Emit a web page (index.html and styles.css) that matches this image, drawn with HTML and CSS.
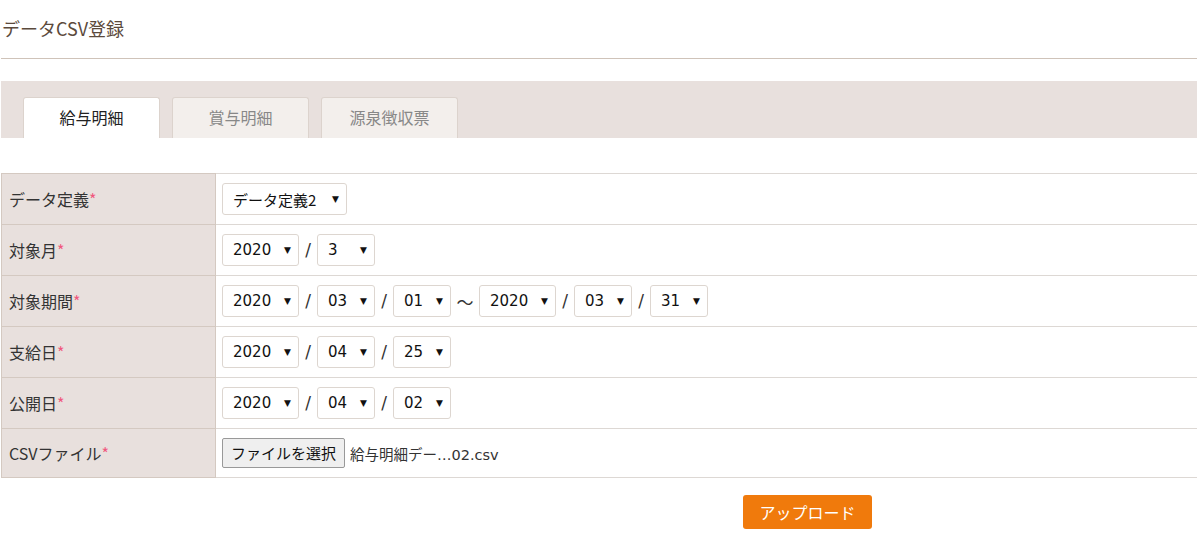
FILE: index.html
```html
<!DOCTYPE html>
<html lang="ja">
<head>
    <meta charset="UTF-8">
    <title>データCSV登録</title>
    <link rel="stylesheet" href="styles.css">
</head>
<body>
    <h1 class="page-title">データCSV登録</h1>

    <div class="tabs">
        <a class="tab active">給与明細</a>
        <a class="tab">賞与明細</a>
        <a class="tab">源泉徴収票</a>
    </div>

    <form class="csv-form">
        <table class="form-table">
            <tr>
                <th>データ定義<span class="req">*</span></th>
                <td>
                    <div class="fields">
                        <span class="sel w-def"><select><option>データ定義2</option></select></span>
                    </div>
                </td>
            </tr>
            <tr>
                <th>対象月<span class="req">*</span></th>
                <td>
                    <div class="fields">
                        <span class="sel w-year"><select><option>2020</option></select></span>
                        <span class="sep">/</span>
                        <span class="sel w-md"><select><option>3</option></select></span>
                    </div>
                </td>
            </tr>
            <tr>
                <th>対象期間<span class="req">*</span></th>
                <td>
                    <div class="fields">
                        <span class="sel w-year"><select><option>2020</option></select></span>
                        <span class="sep">/</span>
                        <span class="sel w-md"><select><option>03</option></select></span>
                        <span class="sep">/</span>
                        <span class="sel w-md"><select><option>01</option></select></span>
                        <span class="tilde">～</span>
                        <span class="sel w-year"><select><option>2020</option></select></span>
                        <span class="sep">/</span>
                        <span class="sel w-md"><select><option>03</option></select></span>
                        <span class="sep">/</span>
                        <span class="sel w-md"><select><option>31</option></select></span>
                    </div>
                </td>
            </tr>
            <tr>
                <th>支給日<span class="req">*</span></th>
                <td>
                    <div class="fields">
                        <span class="sel w-year"><select><option>2020</option></select></span>
                        <span class="sep">/</span>
                        <span class="sel w-md"><select><option>04</option></select></span>
                        <span class="sep">/</span>
                        <span class="sel w-md"><select><option>25</option></select></span>
                    </div>
                </td>
            </tr>
            <tr>
                <th>公開日<span class="req">*</span></th>
                <td>
                    <div class="fields">
                        <span class="sel w-year"><select><option>2020</option></select></span>
                        <span class="sep">/</span>
                        <span class="sel w-md"><select><option>04</option></select></span>
                        <span class="sep">/</span>
                        <span class="sel w-md"><select><option>02</option></select></span>
                    </div>
                </td>
            </tr>
            <tr class="last">
                <th>CSVファイル<span class="req">*</span></th>
                <td>
                    <div class="fields">
                        <span class="file-btn">ファイルを選択</span>
                        <span class="file-name">給与明細デー…02.csv</span>
                    </div>
                </td>
            </tr>
        </table>

        <div class="actions">
            <button type="submit" class="btn-upload">アップロード</button>
        </div>
    </form>
</body>
</html>
```

FILE: styles.css
```css
body {
    margin: 0;
    padding: 0 0 0 1px;
    font-family: "DejaVu Sans", "Noto Sans CJK JP", sans-serif;
    color: #333;
    background-color: #fff;
}

.page-title {
    margin: 0;
    padding: 16px 0 0 1px;
    height: 42px;
    box-sizing: content-box;
    font-family: "Noto Sans CJK JP", sans-serif;
    font-size: 18px;
    font-weight: normal;
    line-height: 24px;
    color: #5b4a3c;
    border-bottom: 1px solid #cfc3b9;
}

.tabs {
    margin-top: 22px;
    height: 57px;
    padding: 16px 0 0 22px;
    box-sizing: border-box;
    background-color: #e8e0dd;
    display: flex;
    gap: 12px;
}

.tab {
    width: 137px;
    height: 41px;
    box-sizing: border-box;
    border: 1px solid #dcd3cd;
    border-bottom: none;
    border-radius: 3px 3px 0 0;
    background-color: #f3efec;
    color: #888;
    font-family: "Noto Sans CJK JP", sans-serif;
    font-size: 16px;
    display: flex;
    align-items: center;
    justify-content: center;
    padding-bottom: 2px;
}

.tab.active {
    background-color: #fff;
    color: #222;
}

.csv-form {
    margin-top: 35px;
}

.form-table {
    width: 100%;
    border-collapse: collapse;
}

.form-table th,
.form-table td {
    height: 50px;
    border-top: 1px solid #ddd8d4;
    padding: 0;
}

.form-table th {
    width: 206px;
    padding-left: 7px;
    text-align: left;
    font-family: "Noto Sans CJK JP", sans-serif;
    font-size: 16px;
    font-weight: normal;
    color: #333;
    background-color: #e8e0dd;
    border: 1px solid #d4c9c1;
}

.form-table td {
    padding-left: 6px;
    border-bottom: 1px solid #ddd8d4;
    white-space: nowrap;
}

.form-table tr.last th,
.form-table tr.last td {
    height: 48px;
}

.fields {
    display: flex;
    align-items: center;
}

.req {
    color: #f0587e;
}

.sel {
    position: relative;
    display: block;
}

.sel select {
    appearance: none;
    -webkit-appearance: none;
    width: 100%;
    height: 32px;
    padding: 0 0 0 10px;
    border: 1px solid #ddd6d0;
    border-radius: 3px;
    background-color: #fff;
    font-family: "DejaVu Sans", "Noto Sans CJK JP", sans-serif;
    font-size: 15px;
    color: #111;
}

.sel::after {
    content: "▼";
    position: absolute;
    right: 8px;
    top: 10px;
    font-size: 9px;
    line-height: 12px;
    color: #111;
    pointer-events: none;
}

.w-def { width: 125px; }
.w-def select { font-family: "Noto Sans CJK JP", sans-serif; }
.w-year { width: 77px; }
.w-md { width: 58px; }

.sep {
    width: 18px;
    text-align: center;
    font-size: 17px;
    color: #333;
}

.tilde {
    width: 28px;
    text-align: center;
    font-family: "Noto Sans CJK JP", sans-serif;
    font-size: 17px;
    color: #333;
}

.file-btn {
    height: 30px;
    line-height: 28px;
    padding: 0 8px;
    box-sizing: border-box;
    border: 1px solid #999;
    border-radius: 2px;
    background-color: #efefef;
    font-family: "Noto Sans CJK JP", sans-serif;
    font-size: 15px;
    color: #111;
}

.file-name {
    margin-left: 5px;
    font-family: "DejaVu Sans", "Noto Sans CJK JP", sans-serif;
    font-size: 14.5px;
    color: #333;
}

.actions {
    padding: 17px 0 0 742px;
}

.btn-upload {
    width: 129px;
    height: 34px;
    border: none;
    border-radius: 3px;
    background-color: #f07a0c;
    color: #fff;
    font-family: "Noto Sans CJK JP", sans-serif;
    font-size: 16px;
    cursor: pointer;
}
```
